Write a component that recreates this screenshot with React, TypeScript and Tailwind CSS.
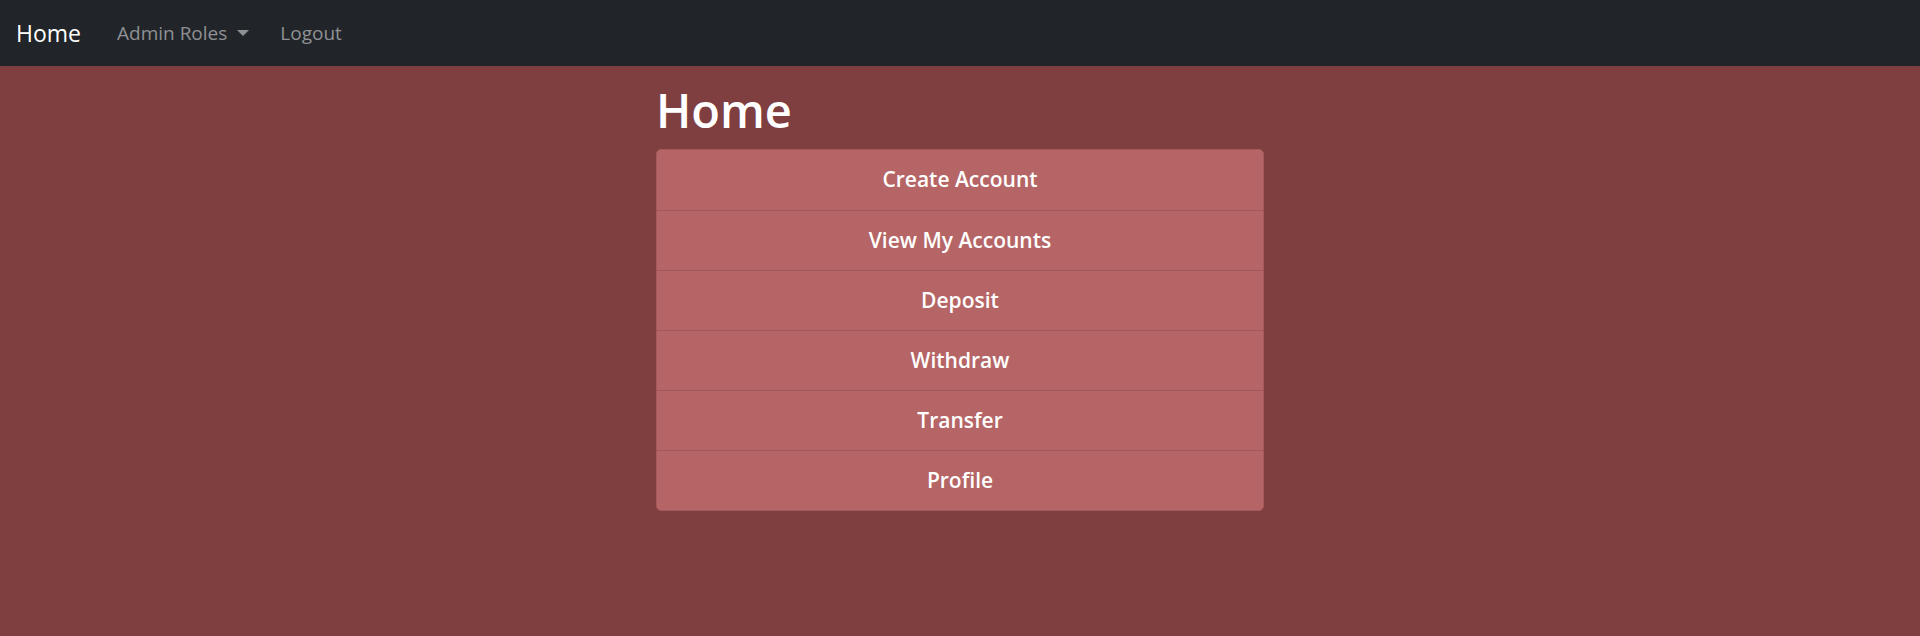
const links = ["Create Account", "View My Accounts", "Deposit", "Withdraw", "Transfer", "Profile"];

export default function App() {
    return (
        <div className="min-h-screen bg-[#7f3e40] font-['Open_Sans',sans-serif]">
            {/* Top navbar */}
            <nav className="h-[66px] bg-[#212529] flex items-center px-[16px]">
                <a className="text-white text-[23px] leading-none mr-[36px]">Home</a>
                <div className="flex items-center text-[19px] leading-none text-[#8f9194]">
                    <a className="flex items-center">
                        Admin Roles
                        <span className="ml-[10px] w-0 h-0 border-t-[6px] border-t-[#8f9194] border-x-[6px] border-x-transparent" />
                    </a>
                    <a className="ml-[31px]">Logout</a>
                </div>
            </nav>

            {/* Main content */}
            <div className="w-[608px] mx-auto pt-[15px]">
                <h1 className="text-white text-[47px] leading-[58px] font-semibold mb-[10px]">Home</h1>
                <div className="rounded-[5px] border border-[#a4595b] bg-[#b56565] overflow-hidden">
                    {links.map((label, i) => (
                        <a
                            key={label}
                            className={
                                "h-[60px] flex items-center justify-center text-white text-[21px] font-semibold " +
                                (i > 0 ? "border-t border-[#a0585a]" : "")
                            }
                        >
                            {label}
                        </a>
                    ))}
                </div>
            </div>
        </div>
    );
}
